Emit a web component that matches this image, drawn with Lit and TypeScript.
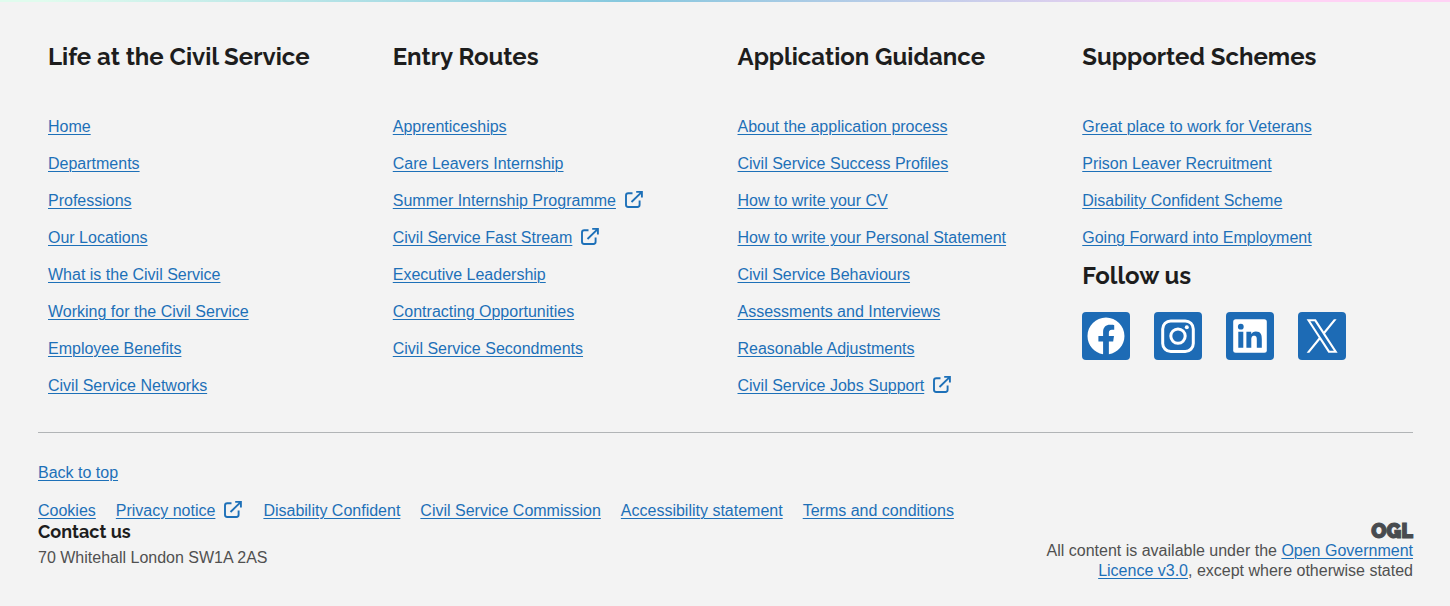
import { LitElement, html, css, svg, nothing } from "lit";
import { customElement } from "lit/decorators.js";

interface FooterLink {
  label: string;
  external?: boolean;
}

interface LinkGroup {
  title: string;
  links: FooterLink[];
}

const groups: LinkGroup[] = [
  {
    title: "Life at the Civil Service",
    links: [
      { label: "Home" },
      { label: "Departments" },
      { label: "Professions" },
      { label: "Our Locations" },
      { label: "What is the Civil Service" },
      { label: "Working for the Civil Service" },
      { label: "Employee Benefits" },
      { label: "Civil Service Networks" },
    ],
  },
  {
    title: "Entry Routes",
    links: [
      { label: "Apprenticeships" },
      { label: "Care Leavers Internship" },
      { label: "Summer Internship Programme", external: true },
      { label: "Civil Service Fast Stream", external: true },
      { label: "Executive Leadership" },
      { label: "Contracting Opportunities" },
      { label: "Civil Service Secondments" },
    ],
  },
  {
    title: "Application Guidance",
    links: [
      { label: "About the application process" },
      { label: "Civil Service Success Profiles" },
      { label: "How to write your CV" },
      { label: "How to write your Personal Statement" },
      { label: "Civil Service Behaviours" },
      { label: "Assessments and Interviews" },
      { label: "Reasonable Adjustments" },
      { label: "Civil Service Jobs Support", external: true },
    ],
  },
  {
    title: "Supported Schemes",
    links: [
      { label: "Great place to work for Veterans" },
      { label: "Prison Leaver Recruitment" },
      { label: "Disability Confident Scheme" },
      { label: "Going Forward into Employment" },
    ],
  },
];

const legalLinks: FooterLink[] = [
  { label: "Cookies" },
  { label: "Privacy notice", external: true },
  { label: "Disability Confident" },
  { label: "Civil Service Commission" },
  { label: "Accessibility statement" },
  { label: "Terms and conditions" },
];

const socials = [
  {
    name: "Facebook",
    art: svg`<g transform="translate(5.5 5.5) scale(1.54)"><path fill="#fff" d="M24 12.073c0-6.627-5.373-12-12-12s-12 5.373-12 12c0 5.99 4.388 10.954 10.125 11.854v-8.385H7.078v-3.47h3.047V9.43c0-3.007 1.792-4.669 4.533-4.669 1.312 0 2.686.235 2.686.235v2.953H15.83c-1.491 0-1.956.925-1.956 1.874v2.25h3.328l-.532 3.47h-2.796v8.385C19.612 23.027 24 18.062 24 12.073z"/></g>`,
  },
  {
    name: "Instagram",
    art: svg`<g fill="none" stroke="#fff" stroke-width="3"><rect x="8.7" y="8.9" width="30.6" height="30.6" rx="8"/><circle cx="24" cy="24.1" r="7.2"/></g><circle cx="32.8" cy="15.3" r="2" fill="#fff"/>`,
  },
  {
    name: "LinkedIn",
    art: svg`<rect x="7.2" y="7.2" width="33.6" height="33.6" rx="2.5" fill="#fff"/><g fill="#1d6bb5"><circle cx="14.8" cy="14.7" r="2.9"/><path d="M12.3 19.8h5v15.9h-5zM20.4 19.8h4.8V22c.7-1.3 2.3-2.6 4.7-2.6 5 0 5.9 3.3 5.9 7.6v8.7h-5V28c0-1.8 0-4.2-2.6-4.2s-2.9 2-2.9 4.1v7.8h-4.9z"/></g>`,
  },
  {
    name: "X",
    art: svg`<g transform="translate(7.2 5.6) scale(1.41 1.53)"><path fill="#fff" d="M14.095479 10.316482L22.286354 1h-1.940718l-7.115352 8.087682L7.551414 1H1l8.589488 12.231093L1 23h1.940717l7.509372-8.542861L16.448587 23H23L14.095479 10.316482zM11.436522 13.338465l-.871624-1.218704-6.924311-9.68815h2.981339l5.58978 7.82155.867949 1.218704 7.26506 10.166271h-2.981339L11.436522 13.338465z"/></g>`,
  },
];

const externalIcon = html`<svg class="external" viewBox="0 0 19 20" aria-hidden="true">
  <path
    d="M7.5 2.2H3.2Q1 2.2 1 4.4V13.8Q1 16 3.2 16H12.4Q14.6 16 14.6 13.8V9.4M11.2 .9H16.9V6.6M16.9 .9L6.5 11"
    fill="none"
    stroke="#1d70b8"
    stroke-width="1.9"
  />
</svg>`;

const renderLink = (link: FooterLink) =>
  html`<a href="#">${link.label}</a>${link.external ? externalIcon : nothing}`;

@customElement("app-root")
export class AppRoot extends LitElement {
  static styles = css`
    :host {
      display: block;
      min-height: 100vh;
      background: #f3f3f3;
      color: #505050;
      font: 16px/20px "Liberation Sans", Arial, sans-serif;
    }
    .ribbon {
      height: 2px;
      background: linear-gradient(90deg, #e0fcee 3%, #86c8de 43%, #ffd2f5 86%);
    }
    .footer {
      padding: 40px 37px 26px 38px;
    }
    .groups {
      display: grid;
      grid-template-columns: repeat(4, minmax(0, 1fr));
      gap: 24px;
      padding: 0 10px 36px;
    }
    h2,
    h3 {
      margin: 0;
      color: #1d1d1d;
      font-family: Raleway, Lato, sans-serif;
      font-weight: 700;
    }
    h2 {
      font-size: 24px;
      line-height: 30px;
    }
    h3 {
      font-size: 18px;
      line-height: 22px;
    }
    ul {
      margin: 0;
      padding: 0;
      list-style: none;
    }
    .links {
      display: grid;
      gap: 17px;
      padding-top: 45px;
    }
    .follow {
      padding-top: 13px;
    }
    li {
      display: flex;
      align-items: flex-start;
    }
    a {
      color: #1d70b8;
      text-decoration: underline;
      text-decoration-thickness: 1px;
      text-underline-offset: 2px;
    }
    .external {
      flex: none;
      width: 19px;
      height: 20px;
      margin-left: 9px;
    }
    .socials {
      display: flex;
      gap: 24px;
      padding-top: 21px;
    }
    .social {
      display: block;
      width: 48px;
      height: 48px;
      border-radius: 4px;
      background: #1d6bb5;
    }
    .social svg {
      display: block;
    }
    .base {
      border-top: 1px solid #b1b4b6;
      padding-top: 30px;
    }
    .legal {
      display: flex;
      flex-wrap: wrap;
      column-gap: 20px;
      padding-top: 18px;
    }
    .bottom {
      display: flex;
      justify-content: space-between;
      align-items: flex-start;
    }
    p {
      margin: 0;
    }
    .contact p {
      padding-top: 5px;
    }
    .licence {
      width: 30%;
      text-align: right;
    }
    .ogl {
      color: #484b4f;
      font: 900 20px/20px Raleway, Lato, sans-serif;
      -webkit-text-stroke: 1px #484b4f;
    }
  `;

  render() {
    return html`
      <div class="ribbon"></div>
      <footer class="footer">
        <nav class="groups" aria-label="Footer">
          ${groups.map(
            (group, index) => html`<section>
              <h2>${group.title}</h2>
              <ul class="links">
                ${group.links.map((link) => html`<li>${renderLink(link)}</li>`)}
              </ul>
              ${index === groups.length - 1 ? this.renderFollow() : nothing}
            </section>`
          )}
        </nav>
        <div class="base">
          <a href="#">Back to top</a>
          <ul class="legal">
            ${legalLinks.map((link) => html`<li>${renderLink(link)}</li>`)}
          </ul>
          <div class="bottom">
            <div class="contact">
              <h3>Contact us</h3>
              <p>70 Whitehall London SW1A 2AS</p>
            </div>
            <div class="licence">
              <div class="ogl">OGL</div>
              <p>
                All content is available under the
                <a href="#">Open Government Licence v3.0</a>, except where otherwise stated
              </p>
            </div>
          </div>
        </div>
      </footer>
    `;
  }

  private renderFollow() {
    return html`<div class="follow">
      <h2>Follow us</h2>
      <div class="socials">
        ${socials.map(
          (item) => html`<a class="social" href="#" aria-label=${item.name}>
            <svg width="48" height="48" viewBox="0 0 48 48" aria-hidden="true">${item.art}</svg>
          </a>`
        )}
      </div>
    </div>`;
  }
}
